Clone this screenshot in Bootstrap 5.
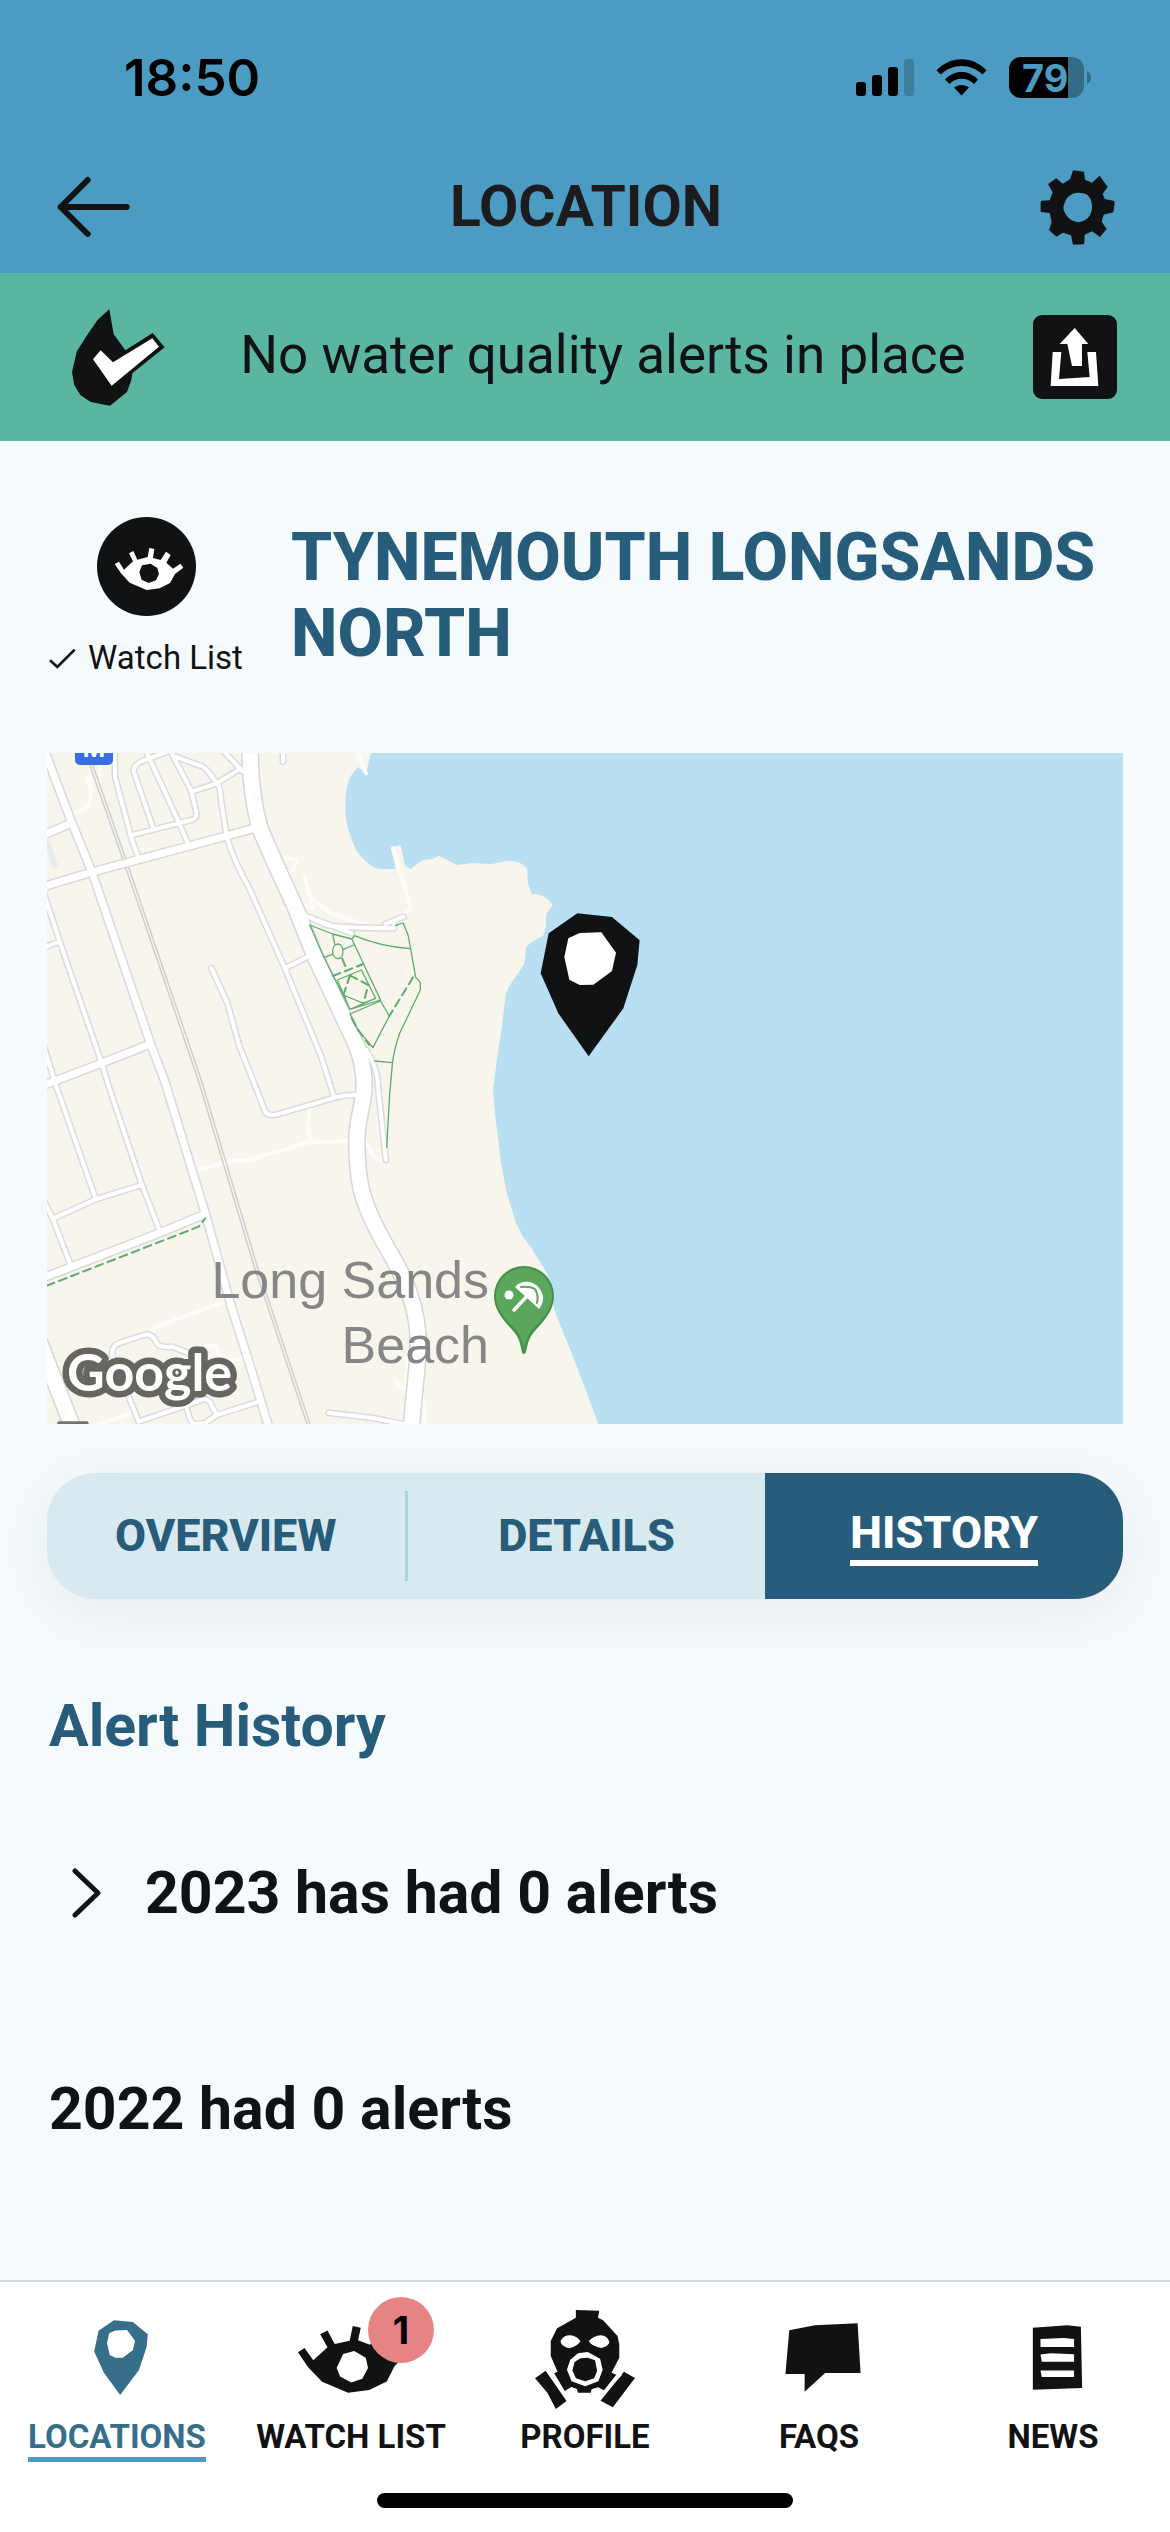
<!DOCTYPE html>
<html lang="en">
<head>
<meta charset="utf-8">
<meta name="viewport" content="width=device-width, initial-scale=1">
<title>Location</title>
<link href="https://cdn.jsdelivr.net/npm/bootstrap@5.3.0/dist/css/bootstrap.min.css" rel="stylesheet">
<style>
  :root { --ink: #111214; --sky: #4c9bc2; --navy: #275c7a; --mint: #5ab6a0; --mist: #f5fafd; }
  body { background: var(--mist); color: var(--ink); font-family: Roboto, "Liberation Sans", sans-serif; }
  svg { display: block; flex: none; }
  a, a:hover { color: inherit; }
  .plain-btn { background: none; border: 0; padding: 0; color: inherit; }
  .top-area { background: var(--sky); }
  .status-row { height: 141px; padding: 15px 78px 0 124px; font-family: Inter, sans-serif; color: #000; }
  .clock { font-size: 51px; font-weight: 600; line-height: 60px; }
  .title-row { height: 132px; padding: 0 55px 0 57px; }
  .screen-title { font-size: 57px; line-height: 72px; font-weight: 700; color: #1c1c1e; }
  .notice { background: var(--mint); height: 168px; padding: 0 53px 0 72px; font-size: 53px; line-height: 64px; }
  .share-btn { width: 84px; height: 84px; border-radius: 9px; background: var(--ink); }
  .place-head { padding: 76px 32px 75px 49px; }
  .watch-btn { width: 194px; }
  .watch-text { font-size: 33px; line-height: 40px; margin-top: 22px; gap: 12px; }
  .place-name { font-weight: 800; font-size: 66px; line-height: 76px; color: var(--navy); margin-left: 48px; padding-top: 3px; }
  .gutter { margin-left: 47px; margin-right: 47px; }
  .road-map path { fill: none; vector-effect: non-scaling-stroke; stroke-linejoin: round; stroke-linecap: round; }
  .road-map .solid { fill: var(--fill); stroke: none; }
  .tab-strip { height: 126px; margin-top: 49px; border-radius: 48px; background: #d8eaf0; box-shadow: 0 12px 60px rgba(20, 20, 30, .06); }
  .tab-item { flex: 1 1 0; color: var(--navy); font-weight: 800; font-size: 45px; line-height: 54px; }
  .tab-item.active { background: var(--navy); color: #fff; }
  .tab-item.active span { border-bottom: 6px solid #fff; }
  .tab-rule { width: 3px; height: 90px; background: #a9d5de; }
  .history { padding: 91px 49px 100px; }
  .history-line { font-size: 59px; line-height: 72px; font-weight: 700; }
  .year-open { margin-top: 95px; padding-left: 23px; gap: 43px; }
  .year-closed { margin-top: 144px; }
  .bottom-nav { background: #fff; border-top: 2px solid #d5d9d9; height: 252px; }
  .nav-entry { flex: 1 1 0; padding-top: 19px; font-size: 33px; line-height: 40px; font-weight: 700; }
  .icon-slot { height: 116px; }
  .nav-entry .label-text { border-bottom: 5px solid transparent; }
  .nav-entry.current { color: #376f8a; }
  .nav-entry.current .label-text { border-color: var(--sky); }
  .count-dot { width: 66px; height: 66px; left: 70px; top: 4px; background: #e58385; color: #000; font-family: Inter, sans-serif; font-size: 38px; }
  .home-bar { width: 416px; height: 15px; border-radius: 8px; background: #000; bottom: 24px; }
</style>
<script src="https://cdn.jsdelivr.net/npm/bootstrap@5.3.0/dist/js/bootstrap.bundle.min.js"></script>
</head>
<body>
<div class="d-flex flex-column min-vh-100">
  <header class="top-area">
    <div class="status-row d-flex align-items-center justify-content-between">
      <span class="clock">18:50</span>
      <svg width="237" height="62" viewBox="855 47 237 62" role="img" aria-label="Signal, Wi-Fi, battery 79">
        <rect x="856" y="82" width="10" height="14" rx="3"/><rect x="872" y="75" width="10" height="21" rx="3"/><rect x="888" y="67" width="10" height="29" rx="3"/><rect x="904" y="59" width="10" height="37" rx="3" fill="#3e7d9c"/>
        <path d="M936.500 70.500C950 55.500 973 55.500 986.500 70.500L982.500 74.500C971 63 952 63 941 74.500ZM945 79.500C954 69.500 969 69.500 978 79.500L974 84C967 77 956 77 949.500 84ZM954 87.500C958.500 84 964.500 84 969 87.500L961.500 95.500Z"/>
        <path d="M1021 57H1072A12 12 0 0 1 1084 69V86A12 12 0 0 1 1072 98H1068V57Z" fill="#346c87"/>
        <path d="M1068 57V98H1021A12 12 0 0 1 1009 86V69A12 12 0 0 1 1021 57Z"/>
        <path d="M1087 71Q1091 73 1091 77.500T1087 84Z" fill="#346c87"/>
        <text x="1022" y="92" font-family="Inter, sans-serif" font-size="38" font-weight="700" fill="#4c9bc2">79</text>
      </svg>
    </div>
    <div class="title-row d-flex align-items-center justify-content-between">
      <button class="plain-btn" aria-label="Back"><svg width="75" height="62" viewBox="49 48 225 186" fill="none" stroke="#111214" stroke-width="18" stroke-linecap="round" stroke-linejoin="round"><path d="M141 60L60 141L141 222M60 141H258"/></svg></button>
      <h1 class="screen-title m-0">LOCATION</h1>
      <button class="plain-btn" aria-label="Settings"><svg width="75" height="75" viewBox="598 388 225 225"><path fill="#111214" fill-rule="evenodd" d="M697 389L730 393L733 417L754 426L777 405L801 439L786 459L792 475L818 480Q823 482 822 487L818 515L789 522L783 543L798 565L778 589L754 572L732 582L731 608Q730 611 727 611L697 612L691 584L667 576L647 588L625 568L633 545L627 517L600 514V485Q600 481 604 480L627 479L636 455L622 430L647 413L666 429L688 416ZM713 456Q731 456 740 462Q753 475 753 490Q757 505 748 524Q738 541 713 545Q692 542 682 530Q668 514 668 500Q672 480 682 469Q696 456 713 456Z"/></svg></button>
    </div>
  </header>
  <div class="notice d-flex align-items-center justify-content-between" role="status">
    <svg width="93" height="97" viewBox="95 446 279 291"><path fill="#111214" d="M207 446L220 522L240 549L255 570L337 518L373 561L276 639L273 660L260 695L209 736L151 725L120 704L102 675L95 636L109 574L138 528L171 480Z"/><path fill="#fff" d="M158 597L181 570L218 606L336 534L356 559L214 676Z"/></svg>
    <span class="ps-2 pb-1">No water quality alerts in place</span>
    <button class="plain-btn share-btn" aria-label="Share"><svg width="84" height="84" viewBox="579 825 252 252" fill="#fff"><path d="M704 864L745 912H726V978H696L682 912H659Z"/><path d="M638 936H664L657 1017L749 1011L742 936H768L775 1038H632Z"/></svg></button>
  </div>
  <main class="flex-grow-1">
    <section class="place-head d-flex align-items-start">
      <button class="plain-btn watch-btn d-flex flex-column align-items-center flex-shrink-0">
        <svg width="99" height="99" viewBox="168 51 297 297"><circle cx="316.500" cy="199.500" r="148.500" fill="#111214"/><path fill="#fff" fill-rule="evenodd" d="M221 192L234 185L249 209L276 184L264 160L277 153L289 179L320 171L325 144L340 147L336 174L359 180L375 155L389 165L376 188L396 206L418 191L427 203L402 222L387 249L356 265L317 270L266 248L240 220ZM329 191L303 196L295 217L302 239L323 249L345 241L354 222L349 204Z"/></svg>
        <span class="watch-text d-flex align-items-center text-nowrap"><svg width="27" height="21" viewBox="36 443 81 63" fill="none" stroke="#111214" stroke-width="8"><path d="M39 480L61 500L113 448"/></svg>Watch List</span>
      </button>
      <h2 class="place-name mb-0">TYNEMOUTH LONGSANDS NORTH</h2>
    </section>
    <div class="gutter">
      <svg class="road-map w-100 h-auto" viewBox="47 753 1076 671" role="img" aria-label="Map of Long Sands Beach">
        <defs>
          <g id="coastRoad"><path d="M550 20C548 90 552 160 572 255C600 340 640 430 670 510L715 640L800 850C830 920 847 960 847 1040C845 1100 828 1140 828 1200C828 1260 832 1310 840 1350C855 1420 890 1490 925 1560C960 1630 985 1710 988 1790C990 1870 980 1920 970 2070M0 1810L88 2070"/></g>
          <g id="streets"><path d="M8 20L82 245L137 400L290 915L325 1020L432 1420L500 1700L555 1900L600 2070M0 290L80 250M0 443L130 398L390 318L490 287L560 265M0 1040L160 970L288 912M0 1617L310 1480L432 1422"/></g>
          <g id="lanes"><path d="M195 20L196 110L240 300L257 352M340 32L270 62Q243 75 245 95L296 265M280 40L362 245L388 315M340 30L396 155L408 215Q412 235 395 240L245 284M350 48L425 80Q435 85 462 130Q472 140 473 180L488 290C500 340 520 390 545 440L640 685L735 950L768 1070M396 155L462 130L525 85M470 22L530 95M635 20V65M640 685L697 652M448 685L490 790L520 915L570 1060L588 1115Q596 1130 620 1123L780 1070Q800 1065 825 1066M5 440L50 600L160 965L180 1040L265 1330L312 1470M5 625L50 605M5 900L40 1030L145 1375M35 1435L145 1378L265 1335M5 1370L35 1440L78 1570M852 930Q885 985 884 1050L904 1260M680 520L750 555Q780 563 925 565V550M700 530L815 580M903 552L950 530M258 2045L190 1850Q182 1820 210 1808L275 1784Q295 1780 305 1810Q312 1824 345 1820L400 1845M258 2045L410 1985Q440 1965 450 2000L462 2025L580 1982M380 1990Q390 2040 400 2052L430 2050L462 2025M755 2018L870 2034L965 2056"/></g>
        </defs>
        <rect x="47" y="753" width="1076" height="671" fill="#b8dff2"/>
        <g transform="translate(40 740) scale(.38265 .33333)">
          <path class="solid" style="--fill:#f8f5ed" d="M0 20H868L860 62L852 100L832 82C800 110 797 160 798 220C802 260 815 310 832 340C850 365 870 387 890 387H929L918 322L942 316L954 376L968 388L998 361L1022 358L1044 348L1090 375L1130 369L1180 372L1220 363C1250 362 1265 372 1273 388L1275 430L1285 461C1310 460 1330 475 1340 495L1323 522L1322 560L1315 587C1290 600 1270 618 1270 625L1266 670C1250 705 1225 730 1217 765L1207 860L1195 950L1184 1050L1190 1130L1205 1270L1218 1350L1244 1450L1262 1490L1282 1520L1325 1600L1344 1710L1400 1870L1465 2070H0Z"/>
          <path stroke="#fdfcfa" stroke-width="4" d="M825 30L852 100M625 352L670 360Q676 370 645 410M692 410L705 470L715 505L675 490M705 470L760 520L870 560M922 325L970 505L950 525M85 222L128 200L135 150L122 110L155 125M155 70L160 110M412 1292L500 1262H540L700 1208L810 1202M845 1205Q860 1215 870 1245Q880 1262 903 1262M705 1105L700 1160L708 1205M495 1680L300 1762L292 1780M420 1820L460 1818L478 1870L550 1850M930 1925L955 1950L965 1830M1000 1970L1010 2070M150 2055L250 2015"/>
          <path stroke="#e9eaf0" stroke-width="6" d="M20 310L38 375"/>
          <path stroke="#cccfd1" stroke-width="1.500" d="M130 75L220 370L415 1025L560 1580L700 2060M138 75L228 370L423 1025L568 1580L708 2060"/>
          <use href="#lanes" stroke="#dadbe1" stroke-width="7"/><use href="#streets" stroke="#d8d9de" stroke-width="10"/><use href="#coastRoad" stroke="#d5d6db" stroke-width="18"/>
          <use href="#lanes" stroke="#fff" stroke-width="4"/><use href="#streets" stroke="#fff" stroke-width="7"/><use href="#coastRoad" stroke="#fff" stroke-width="15"/>
          <g stroke="#5bad6c" stroke-width="1.300">
            <path d="M705 555L765 582L815 597L822 587Q890 620 968 626M705 555L742 652L810 808L890 780L815 597M765 582L770 612M742 652L765 643M793 628L820 615M779 612C795 612 797 655 779 656C760 655 760 612 779 612M777 720L840 690L877 775L810 808ZM793 765L845 790L877 775M810 822L890 783L913 828L870 923L828 865L810 822M928 557L949 549L962 585L982 712L994 727V750L940 880Q925 930 921 970L914 1060L906 1222M875 963L921 968"/>
            <path stroke-width="2" stroke-dasharray="8 5" stroke-linecap="butt" d="M765 708L845 672M790 656L802 690M810 706L858 735L845 790M810 706L793 765M975 712L913 828M815 835L828 865L860 915M18 1637L415 1460L432 1435"/>
          </g>
          <path stroke="#75756f" stroke-width="4" d="M50 2050H122"/>
        </g>
        <rect x="75" y="735" width="38" height="30" rx="5" fill="#386fe0"/>
        <text x="94" y="757" text-anchor="middle" font-family="Inter, sans-serif" font-weight="700" font-size="24" fill="#fff">M</text>
        <g font-family="'Liberation Sans', sans-serif" font-size="52" fill="#868686" text-anchor="end"><text x="489" y="1298">Long Sands</text><text x="489" y="1363">Beach</text></g>
        <text x="67" y="1391" font-family="Lato, sans-serif" font-weight="700" font-size="52" fill="#fff" stroke="#666560" stroke-width="13" stroke-linejoin="round" paint-order="stroke">Google</text>
        <path class="solid" style="--fill:#47904c" d="M524 1354C520 1354 523 1343 514 1332C503 1320 494 1310 494 1296A30 30 0 0 1 554 1296C554 1310 545 1320 534 1332C525 1343 528 1354 524 1354Z"/>
        <path class="solid" style="--fill:#5aa75c" d="M524 1350C522 1340 520 1334 515 1329C504 1317 496 1309 496 1296A28 28 0 0 1 552 1296C552 1309 544 1317 533 1329C528 1334 526 1340 524 1350Z"/>
        <circle cx="509" cy="1295" r="4.500" fill="#fff"/>
        <path stroke="#fff" stroke-width="3.500" d="M514 1310L530 1293"/>
        <path class="solid" style="--fill:#fff" d="M515 1287C522 1279 534 1281 539 1288C545 1295 544 1303 539 1309Z"/>
        <path stroke="#5aa75c" stroke-width="2" d="M521 1287Q530 1286 535 1289Q539 1296 537 1303"/>
        <g transform="translate(500 880) scale(.33333)"><path class="solid" style="--fill:#111214" d="M232 100L336 111L419 181L412 255L370 385L266 529L175 400L122 280L146 160Z"/><path class="solid" style="--fill:#fff" d="M205 175L239 159L304 157L348 218L336 273L280 314L239 315L208 299L193 231Z"/></g>
      </svg>
      <nav class="tab-strip d-flex align-items-center overflow-hidden" aria-label="Location sections">
        <button class="plain-btn tab-item h-100">OVERVIEW</button>
        <div class="tab-rule"></div>
        <button class="plain-btn tab-item h-100">DETAILS</button>
        <button class="plain-btn tab-item active h-100" aria-current="page"><span class="d-inline-block">HISTORY</span></button>
      </nav>
    </div>
    <section class="history">
      <h2 class="history-line mb-0" style="color:var(--navy)">Alert History</h2>
      <button class="plain-btn history-line year-open d-flex align-items-center" aria-expanded="false">
        <svg width="30" height="52" viewBox="0 0 30 52" fill="none" stroke="#111214" stroke-width="5" stroke-linecap="round" stroke-linejoin="round"><path d="M3 4L26 26L3 48"/></svg>2023 has had 0 alerts
      </button>
      <h3 class="history-line year-closed mb-0">2022 had 0 alerts</h3>
    </section>
  </main>
  <nav class="bottom-nav d-flex position-relative text-center" aria-label="Main">
    <a href="#" class="nav-entry current text-decoration-none" aria-current="page"><span class="icon-slot d-flex align-items-center justify-content-center ps-2 pb-1"><svg width="54" height="75" viewBox="121 99 299 430" preserveAspectRatio="none"><path fill="#376f8a" fill-rule="evenodd" d="M232 100L336 111L419 181L412 255L370 385L266 529L175 400L122 280L146 160ZM205 175L193 231L208 299L239 315H280L336 273L348 218L304 157L239 159Z"/></svg></span><span class="label-text d-inline-block">LOCATIONS</span></a>
    <a href="#" class="nav-entry text-decoration-none"><span class="icon-slot d-flex align-items-center justify-content-center"><span class="position-relative"><svg width="106" height="67" viewBox="780 203 277 196" preserveAspectRatio="none"><path fill="#111214" fill-rule="evenodd" d="M780 280L797 267L820 303L857 265L838 227L857 216L876 256L915 246L923 203L944 208L937 245L968 258L990 225L1006 235L992 265L1020 295L1046 275L1057 292L1032 321L1012 365L966 390L911 398L843 366L806 323ZM927 276L898 285L881 326L890 351L919 368L948 357L963 326L957 296Z"/></svg><span class="count-dot position-absolute rounded-circle d-flex align-items-center justify-content-center translate-middle-y">1</span></span></span><span class="label-text d-inline-block">WATCH LIST</span></a>
    <a href="#" class="nav-entry text-decoration-none"><span class="icon-slot d-flex align-items-center justify-content-center"><svg width="100" height="99" viewBox="80 147 235 297" preserveAspectRatio="none"><path fill="#111214" d="M176 147L231 149L228 170L240 178L274 225L278 250V290L260 335L271 341L242 388L228 379L213 385L211 395H181L178 383L165 378L150 390L125 337L133 332L117 285V240L132 202L176 170ZM105 329L154 420L129 444L109 395L80 352ZM289 332L315 351L263 439L234 419Z"/><path fill="#fff" d="M140 240Q147 222 163 223Q178 224 187 241Q178 257 160 262Q140 256 140 240ZM206 241Q218 224 234 223Q250 224 255 243Q252 257 236 261Q215 257 206 241ZM204 273L233 293L239 326L229 361L198 376L166 361L155 326L163 296L181 277Z"/><path fill="#111214" d="M204 290L221 298L226 330L219 352L198 361L176 352L168 328L173 303L187 292Z"/><path stroke="#fff" stroke-width="5" fill="none" d="M112 336L152 402M283 340L236 402"/></svg></span><span class="label-text d-inline-block">PROFILE</span></a>
    <a href="#" class="nav-entry text-decoration-none"><span class="icon-slot d-flex align-items-center justify-content-center ps-2 pb-1"><svg width="76" height="69" viewBox="668 191 178 208" preserveAspectRatio="none"><path fill="#111214" d="M678 213L738 198L838 192L845 342H762L714 398V345H669Z"/></svg></span><span class="label-text d-inline-block">FAQS</span></a>
    <a href="#" class="nav-entry text-decoration-none"><span class="icon-slot d-flex align-items-center justify-content-center ps-2 pb-1"><svg width="51" height="65" viewBox="1241 193 120 194" preserveAspectRatio="none"><path fill="#111214" fill-rule="evenodd" d="M1243 201L1324 194L1356 198L1359 381L1243 386ZM1261 235V259H1340V235L1316 232ZM1261 281L1264 303H1340V280L1285 277ZM1261 329L1264 348H1340V329Z"/></svg></span><span class="label-text d-inline-block">NEWS</span></a>
    <div class="home-bar position-absolute start-50 translate-middle-x"></div>
  </nav>
</div>
</body>
</html>
